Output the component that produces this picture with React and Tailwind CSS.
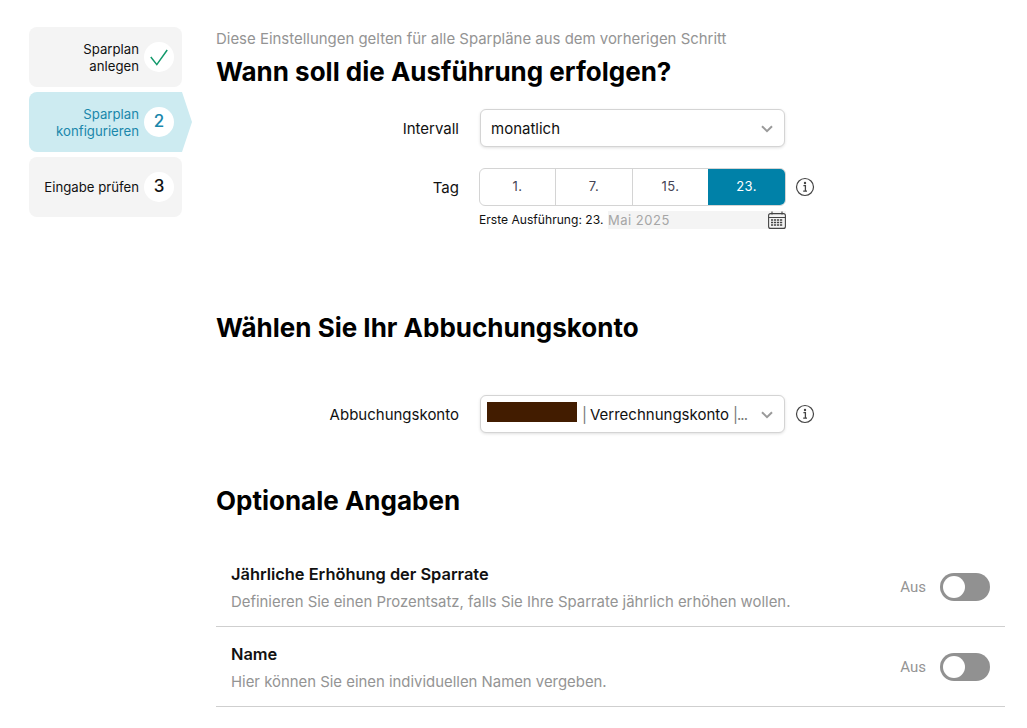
import React from "react";

function Step({ label, children, active }) {
  return (
    <div className={`relative h-[60px] flex items-center justify-end pl-2 pr-[8px] gap-[5px] ${active ? "bg-[#cdebf1] rounded-l-lg text-[#1a87ab]" : "bg-[#f4f4f4] rounded-lg text-[#111]"}`}>
      <div className="text-right text-[13.2px] leading-[17px] mt-[1px]">{label}</div>
      <div className="w-[30px] h-[30px] shrink-0 rounded-full bg-white flex items-center justify-center text-[17px] font-medium">{children}</div>
      {active && <div className="absolute left-full top-0 w-0 h-0 border-y-[30px] border-y-transparent border-l-[10px] border-l-[#cdebf1]" />}
    </div>
  );
}

function Chevron() {
  return (
    <svg width="12" height="8" viewBox="0 0 12 8" fill="none" className="shrink-0">
      <path d="M1 1.2 6 6.2l5-5" stroke="#9a9a9a" strokeWidth="2" />
    </svg>
  );
}

function Info() {
  return (
    <svg width="20" height="20" viewBox="0 0 20 20" fill="none" className="shrink-0">
      <circle cx="10" cy="10" r="8.5" stroke="#444" strokeWidth="1.2" />
      <circle cx="10" cy="6" r="1.2" fill="#444" />
      <path d="M8.4 8.7H10.4V14M8.2 14.2H12" stroke="#444" strokeWidth="1.3" />
    </svg>
  );
}

function Calendar() {
  return (
    <svg width="18" height="18" viewBox="0 0 18 18" fill="none" className="shrink-0">
      <rect x="0.6" y="2.6" width="16.8" height="14.8" rx="2" stroke="#444" strokeWidth="1.1" />
      <path d="M0.6 6.5H17.4M4 0.5V3.5M14 0.5V3.5" stroke="#444" strokeWidth="1.1" />
      <path d="M3 9H15M3 11.5H15M3 14H15" stroke="#444" strokeWidth="1.6" strokeDasharray="2.2 0.8" />
    </svg>
  );
}

function Select({ children }) {
  return (
    <div className="w-[305px] h-[38px] border border-[#d4d4d4] rounded-md bg-white shadow-[0_1px_3px_rgba(0,0,0,0.12)] flex items-center justify-between pl-[10px] pr-[11px] pt-[2px] text-[15px] text-[#111]">
      {children}
      <Chevron />
    </div>
  );
}

function Label({ children }) {
  return <div className="w-[243px] text-right text-[15px] pt-[2px] text-[#111] shrink-0">{children}</div>;
}

function OptRow({ title, desc }) {
  return (
    <div className="h-[80px] border-b border-[#cfcfcf] flex items-center justify-between pl-[15px] pr-[15px]">
      <div className="pt-[3px]">
        <div className="text-[16.4px] leading-[22px] font-semibold text-[#111]">{title}</div>
        <div className="mt-[6px] text-[14.9px] leading-[22px] text-[#949494]">{desc}</div>
      </div>
      <div className="flex items-center gap-[14px]">
        <span className="text-[15px] pt-[2px] text-[#949494] font-['Roboto',sans-serif]">Aus</span>
        <div className="w-[50px] h-[28px] rounded-full bg-[#919191] flex items-center pl-[3px]">
          <div className="w-[22px] h-[22px] rounded-full bg-white" />
        </div>
      </div>
    </div>
  );
}

export default function App() {
  return (
    <div className="w-[1027px] h-[728px] overflow-hidden bg-white flex font-['Inter',sans-serif]">
      <div className="ml-[29px] mt-[27px] w-[153px] shrink-0 flex flex-col gap-[5px]">
        <Step label={<>Sparplan<br />anlegen</>}>
          <svg width="18" height="17" viewBox="0 0 18 17" fill="none">
            <path d="M0.8 8 6.8 15.6 17.2 1" stroke="#12996b" strokeWidth="1.5" />
          </svg>
        </Step>
        <Step active label={<>Sparplan<br />konfigurieren</>}>2</Step>
        <Step label="Eingabe prüfen">3</Step>
      </div>

      <div className="ml-[34px] w-[789px] shrink-0">
        <div className="mt-[31px] h-[17px] text-[14.95px] leading-[17px] text-[#949494]">Diese Einstellungen gelten für alle Sparpläne aus dem vorherigen Schritt</div>
        <h1 className="mt-[8px] h-[32px] text-[26px] leading-[32px] font-bold text-black">Wann soll die Ausführung erfolgen?</h1>

        <div className="mt-[21px] flex items-center gap-[21px]">
          <Label>Intervall</Label>
          <Select>monatlich</Select>
        </div>

        <div className="mt-[21px] flex items-center">
          <Label>Tag</Label>
          <div className="ml-[20px] w-[307px] h-[38px] flex rounded-md border border-[#d4d4d4] overflow-hidden text-[13px] tracking-[0.4px] text-[#445]">
            <div className="w-[76px] flex items-center justify-center border-r border-[#d4d4d4]">1.</div>
            <div className="w-[77px] flex items-center justify-center border-r border-[#d4d4d4]">7.</div>
            <div className="w-[75px] flex items-center justify-center">15.</div>
            <div className="flex-1 bg-[#0081a8] text-white flex items-center justify-center">23.</div>
          </div>
          <div className="ml-[9px]"><Info /></div>
        </div>

        <div className="mt-[5px] ml-[263px] w-[307px] h-[18px] flex items-center text-[12.1px] text-[#111]">
          <span className="w-[129px] shrink-0 whitespace-nowrap pt-[1px]">Erste Ausführung: 23.</span>
          <div className="flex-1 h-[18px] bg-[#f4f4f4] flex items-center justify-between text-[#a6a6a6] text-[13px] tracking-[0.5px]">
            <span className="pt-[1px]">Mai 2025</span>
            <Calendar />
          </div>
        </div>

        <h2 className="mt-[83px] h-[32px] text-[26px] leading-[32px] font-bold text-black">Wählen Sie Ihr Abbuchungskonto</h2>

        <div className="mt-[51px] flex items-center">
          <Label>Abbuchungskonto</Label>
          <div className="ml-[21px]">
            <Select>
              <span className="flex items-center whitespace-nowrap -ml-[4px]">
                <span className="inline-block w-[90px] h-[20px] bg-[#421c00] mr-[5px] mb-[6px]" />
                <span className="text-[#777] mr-[3px]">|</span>Verrechnungskonto<span className="text-[#777] ml-[4px] tracking-[-1px]">|...</span>
              </span>
            </Select>
          </div>
          <div className="ml-[10px]"><Info /></div>
        </div>

        <h2 className="mt-[52px] h-[32px] text-[26px] leading-[32px] font-bold text-black">Optionale Angaben</h2>

        <div className="mt-[30px]">
          <OptRow title="Jährliche Erhöhung der Sparrate" desc="Definieren Sie einen Prozentsatz, falls Sie Ihre Sparrate jährlich erhöhen wollen." />
          <OptRow title="Name" desc="Hier können Sie einen individuellen Namen vergeben." />
        </div>
      </div>
    </div>
  );
}
